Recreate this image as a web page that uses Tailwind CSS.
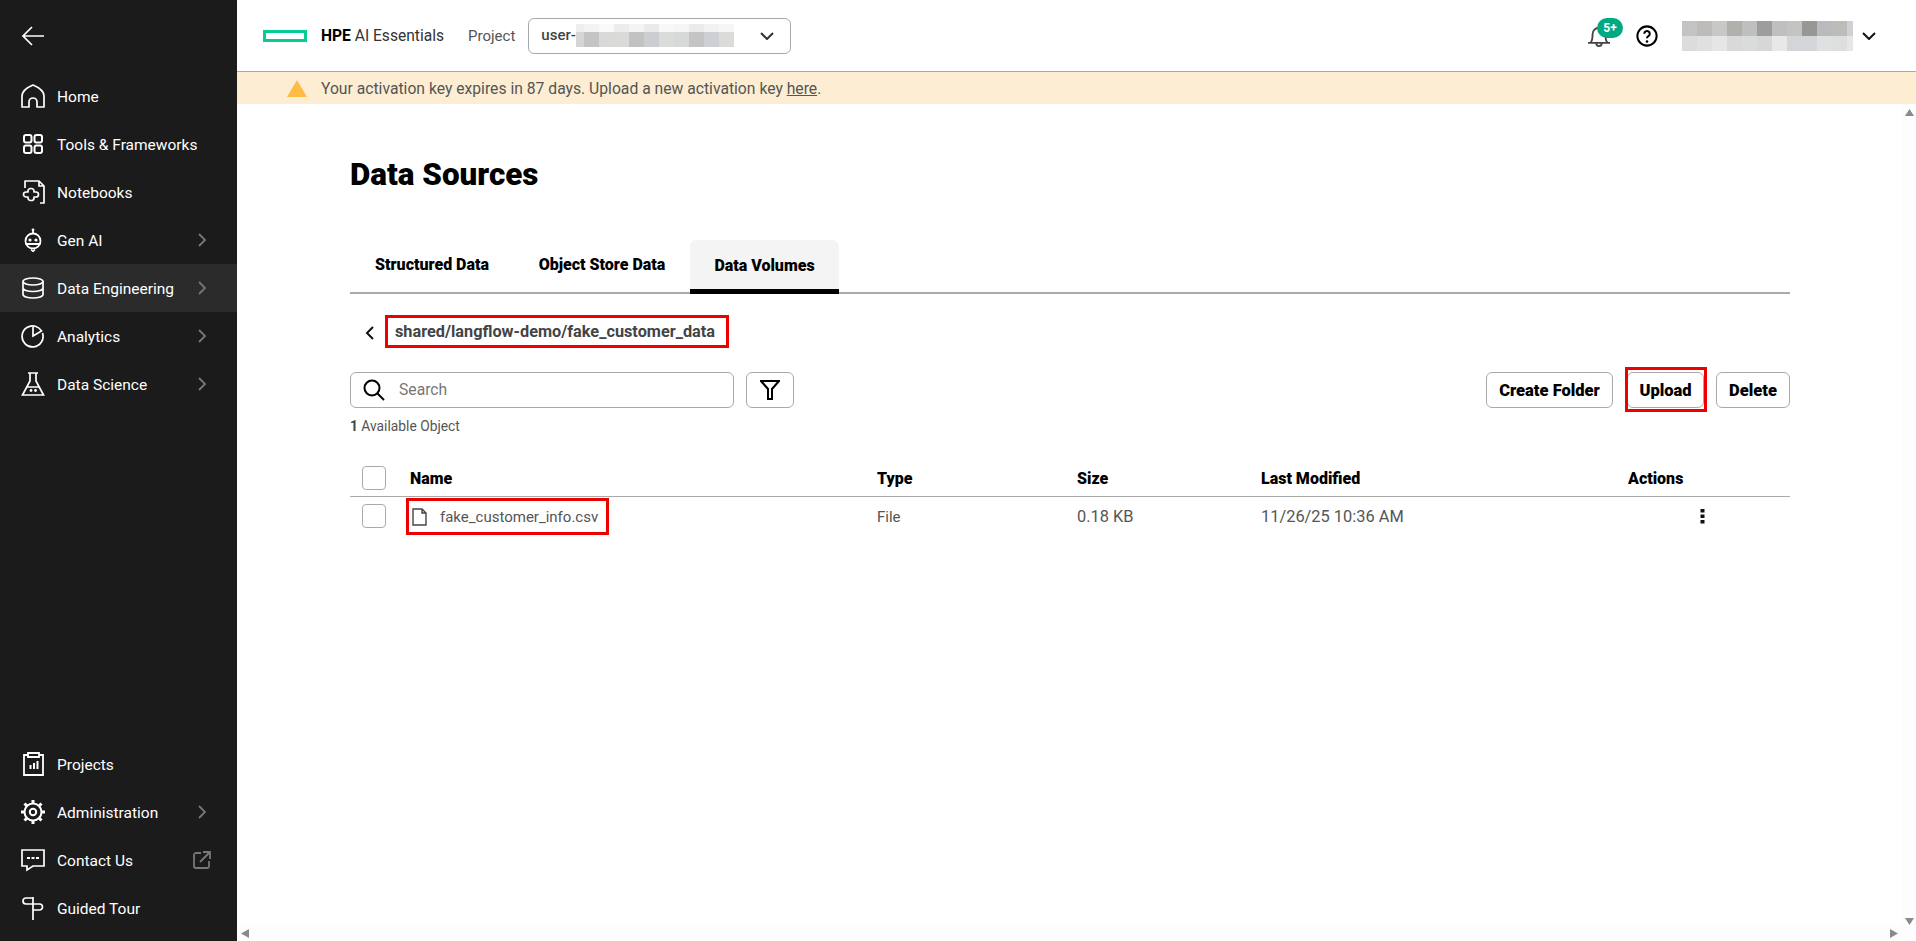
<!DOCTYPE html>
<html lang="en">
<head>
<meta charset="UTF-8">
<title>Data Sources</title>
<script src="https://cdn.jsdelivr.net/npm/@tailwindcss/browser@4"></script>
</head>
<body class="flex h-screen overflow-hidden bg-white font-['Roboto',sans-serif] text-[#444]">

<!-- Sidebar -->
<aside class="w-[237px] shrink-0 bg-[#1b1b1b] text-white flex flex-col text-[15.500px]">
  <div class="h-[72px] pl-[21px] flex items-center">
    <svg class="w-6 h-6" viewBox="0 0 24 24" fill="none" stroke="white" stroke-width="1.700"><path d="M23 12H2M11 3l-9 9 9 9"/></svg>
  </div>
  <nav>
    <a class="h-12 flex items-center pl-[21px]">
      <svg class="w-6 h-6 mr-[12px]" viewBox="0 0 24 24" fill="none" stroke="white" stroke-width="1.700" stroke-linejoin="round"><path d="M1 23V12C1 7 6 3.500 12 1c6 2.500 11 6 11 11v11h-7v-5a4 4 0 0 0-8 0v5z"/></svg>
      <span class="pt-1">Home</span>
    </a>
    <a class="h-12 flex items-center pl-[21px]">
      <svg class="w-6 h-6 mr-[12px]" viewBox="0 0 24 24" fill="none" stroke="white" stroke-width="2"><rect x="3" y="3" width="7.500" height="7.500" rx="2"/><rect x="13.500" y="3" width="7.500" height="7.500" rx="2"/><rect x="3" y="13.500" width="7.500" height="7.500" rx="2"/><rect x="13.500" y="13.500" width="7.500" height="7.500" rx="2"/></svg>
      <span class="pt-1">Tools &amp; Frameworks</span>
    </a>
    <a class="h-12 flex items-center pl-[21px]">
      <svg class="w-6 h-6 mr-[12px]" viewBox="0 0 24 24" fill="none" stroke="white" stroke-width="1.700" stroke-linejoin="round"><path d="M4 8V1h14l5 5v17h-4M18 1v5h5"/><path d="M7 11a2.500 2.500 0 0 1 2.500-2.500h1A2.500 2.500 0 0 1 13 11v1h2a2.500 2.500 0 0 1 0 5h-2v1a2.500 2.500 0 0 1-2.500 2.500h-1A2.500 2.500 0 0 1 7 18v-1H5a2.500 2.500 0 0 1 0-5h2z"/></svg>
      <span class="pt-1">Notebooks</span>
    </a>
    <a class="h-12 flex items-center pl-[21px]">
      <svg class="w-6 h-6 mr-[12px]" viewBox="0 0 24 24" fill="none" stroke="white" stroke-width="1.800"><ellipse cx="12" cy="13" rx="7.500" ry="7.500"/><path d="M12 3v3M4.500 16h15"/><circle cx="12" cy="1.800" r="1.400" fill="white" stroke="none"/><circle cx="9" cy="12" r="1.600" fill="white" stroke="none"/><circle cx="15" cy="12" r="1.600" fill="white" stroke="none"/><path d="M10 21.500l2 2 2-2" stroke-width="1.500"/></svg>
      <span class="pt-1">Gen AI</span>
      <svg class="ml-auto mr-[31px] w-2 h-[14px]" viewBox="0 0 8 14" fill="none" stroke="#777" stroke-width="1.800"><path d="M1 1l6 6-6 6"/></svg>
    </a>
    <a class="h-12 flex items-center pl-[21px] bg-[#2b2b2b]">
      <svg class="w-6 h-6 mr-[12px]" viewBox="0 0 24 24" fill="none" stroke="white" stroke-width="1.700"><ellipse cx="12" cy="5.500" rx="10" ry="3.500"/><path d="M2 5.500v13c0 2 4.500 3.500 10 3.500s10-1.500 10-3.500v-13M2 12c0 2 4.500 3.500 10 3.500S22 14 22 12"/></svg>
      <span class="pt-1">Data Engineering</span>
      <svg class="ml-auto mr-[31px] w-2 h-[14px]" viewBox="0 0 8 14" fill="none" stroke="#777" stroke-width="1.800"><path d="M1 1l6 6-6 6"/></svg>
    </a>
    <a class="h-12 flex items-center pl-[21px]">
      <svg class="w-6 h-6 mr-[12px]" viewBox="0 0 24 24" fill="none" stroke="white" stroke-width="1.700"><path d="M15 2.500A10.500 10.500 0 1 0 21.500 9"/><path d="M12 3v9l8.500-5A10 10 0 0 0 15 2.500"/></svg>
      <span class="pt-1">Analytics</span>
      <svg class="ml-auto mr-[31px] w-2 h-[14px]" viewBox="0 0 8 14" fill="none" stroke="#777" stroke-width="1.800"><path d="M1 1l6 6-6 6"/></svg>
    </a>
    <a class="h-12 flex items-center pl-[21px]">
      <svg class="w-6 h-6 mr-[12px]" viewBox="0 0 24 24" fill="none" stroke="white" stroke-width="1.700"><path d="M7 1h10M9 1v8L1.500 23h21L15 9V1M5.500 15h13"/><circle cx="10" cy="18.500" r="1.400" fill="white" stroke="none"/><circle cx="14.500" cy="18.500" r="1.400" fill="white" stroke="none"/></svg>
      <span class="pt-1">Data Science</span>
      <svg class="ml-auto mr-[31px] w-2 h-[14px]" viewBox="0 0 8 14" fill="none" stroke="#777" stroke-width="1.800"><path d="M1 1l6 6-6 6"/></svg>
    </a>
  </nav>
  <nav class="mt-auto pb-[9px]">
    <a class="h-12 flex items-center pl-[21px]">
      <svg class="w-6 h-6 mr-[12px]" viewBox="0 0 24 24" fill="none" stroke="white" stroke-width="1.800"><path d="M7 3H3v20h19V3h-4M7 1h11v4H7z"/><path d="M9.500 17v-4M13 17v-6M16.500 17v-8" stroke-width="2"/></svg>
      <span class="pt-1">Projects</span>
    </a>
    <a class="h-12 flex items-center pl-[21px]">
      <svg class="w-6 h-6 mr-[12px]" viewBox="0 0 24 24" fill="none" stroke="white" stroke-width="2"><circle cx="12" cy="12" r="8.500"/><circle cx="12" cy="12" r="3.200"/><path d="M12 0v3.500M12 20.500V24M0 12h3.500M20.500 12H24M3.500 3.500 6 6M18 18l2.500 2.500M20.500 3.500 18 6M6 18l-2.500 2.500" stroke-width="3"/></svg>
      <span class="pt-1">Administration</span>
      <svg class="ml-auto mr-[31px] w-2 h-[14px]" viewBox="0 0 8 14" fill="none" stroke="#777" stroke-width="1.800"><path d="M1 1l6 6-6 6"/></svg>
    </a>
    <a class="h-12 flex items-center pl-[21px]">
      <svg class="w-6 h-6 mr-[12px]" viewBox="0 0 24 24" fill="none" stroke="white" stroke-width="1.700"><path d="M1 2h22v16H12l-6 4v-4H1z"/><path d="M6 10h3M10.500 10h3M15 10h3" stroke-width="2.200"/></svg>
      <span class="pt-1">Contact Us</span>
      <svg class="ml-auto mr-[26px] w-[18px] h-[18px]" viewBox="0 0 18 18" fill="none" stroke="#777" stroke-width="1.800"><path d="M8 2H3a2 2 0 0 0-2 2v11a2 2 0 0 0 2 2h11a2 2 0 0 0 2-2v-5M7 11 17 1M10 1h7v7"/></svg>
    </a>
    <a class="h-12 flex items-center pl-[21px]">
      <svg class="w-6 h-6 mr-[12px]" viewBox="0 0 24 24" fill="none" stroke="white" stroke-width="1.700"><path d="M12 1v23M12 2H5a3 3 0 0 0 0 6h7M12 8h6.500a3 3 0 0 1 0 6H12"/></svg>
      <span class="pt-1">Guided Tour</span>
    </a>
  </nav>
</aside>

<div class="flex-1 min-w-0 flex flex-col">
  <!-- Header -->
  <header class="h-[72px] shrink-0 border-b border-[#aaa] flex items-center pl-[26px]">
    <span class="w-[44px] h-[12px] border-[3px] border-[#05cc93] mr-[14px]"></span>
    <span class="pt-0.5 text-[15.600px] text-[#333] mr-[24px]"><b class="text-black font-bold">HPE</b> AI Essentials</span>
    <span class="pt-0.5 text-[15px] text-[#555] mr-[13px]">Project</span>
    <div class="w-[263px] h-9 border border-[#aaa] rounded-md flex items-center pl-[12px] pr-[16px]">
      <span class="text-[15px] font-medium">user-</span>
      <div class="flex flex-col">
        <div class="flex h-2">
          <i class="w-[8px] bg-[#eee]"></i><i class="w-[15px] bg-[#f3f3f3]"></i><i class="w-[15px] bg-[#f9f9f9]"></i><i class="w-[15px] bg-[#ececec]"></i><i class="w-[15px] bg-[#f4f4f4]"></i><i class="w-[15px] bg-[#eaeaea]"></i><i class="w-[15px] bg-[#f8f8f8]"></i><i class="w-[15px] bg-[#f6f6f6]"></i><i class="w-[15px] bg-[#ebebeb]"></i><i class="w-[15px] bg-[#f2f2f2]"></i><i class="w-[15px] bg-[#f6f6f6]"></i>
        </div>
        <div class="flex h-[15px]">
          <i class="w-[8px] bg-[#d5d5d5]"></i><i class="w-[15px] bg-[#c4c4c4]"></i><i class="w-[15px] bg-[#d8dada]"></i><i class="w-[15px] bg-[#dadad8]"></i><i class="w-[15px] bg-[#c2c2c2]"></i><i class="w-[15px] bg-[#cbcdd0]"></i><i class="w-[15px] bg-[#dadcdc]"></i><i class="w-[15px] bg-[#d7d9d9]"></i><i class="w-[15px] bg-[#c4c4c4]"></i><i class="w-[15px] bg-[#cdcfd2]"></i><i class="w-[15px] bg-[#dbdbd9]"></i>
        </div>
      </div>
      <svg class="ml-auto w-[14px] h-2" viewBox="0 0 14 8" fill="none" stroke="#333" stroke-width="2"><path d="M1 1l6 6 6-6"/></svg>
    </div>
    <div class="ml-auto flex items-center">
      <div class="relative w-[26px] h-[22px] mr-[22px]">
        <svg class="absolute left-0 top-0 w-[22px] h-[22px]" viewBox="0 0 24 24" fill="none" stroke="#444" stroke-width="2"><path d="M3 19c1.500-2 2-4 2-9a7 7 0 0 1 14 0c0 5 .5 7 2 9M0 19.500h24M9 20a3 3 0 0 0 6 0"/></svg>
        <span class="absolute left-[9px] -top-[7px] w-[26px] h-[20px] rounded-full bg-[#01a982] text-white text-[12px] font-bold leading-[20px] text-center">5+</span>
      </div>
      <svg class="w-[22px] h-[22px] mr-[24px]" viewBox="0 0 24 24" fill="none" stroke="black" stroke-width="2.200"><circle cx="12" cy="12" r="10.500"/><path d="M9 9.500a3 3 0 1 1 4.500 2.600c-1 .6-1.500 1.200-1.500 2.400"/><circle cx="12" cy="18" r="1.400" fill="black" stroke="none"/></svg>
      <div class="flex flex-col w-[171px]">
        <div class="flex h-[15px]">
          <i class="w-[15px] bg-[#c4c3c1]"></i><i class="w-[15px] bg-[#bdbcba]"></i><i class="w-[15px] bg-[#c8c9c7]"></i><i class="w-[15px] bg-[#b1b0ac]"></i><i class="w-[15px] bg-[#bfbfbd]"></i><i class="w-[15px] bg-[#9d9d9d]"></i><i class="w-[15px] bg-[#bfbfbf]"></i><i class="w-[15px] bg-[#c3c4c2]"></i><i class="w-[15px] bg-[#989794]"></i><i class="w-[15px] bg-[#b9babc]"></i><i class="w-[15px] bg-[#bebcb9]"></i><i class="w-[6px] bg-[#cfd0d4]"></i>
        </div>
        <div class="flex h-[15px]">
          <i class="w-[15px] bg-[#dcdcdc]"></i><i class="w-[15px] bg-[#e0e0e0]"></i><i class="w-[15px] bg-[#e6e6e6]"></i><i class="w-[15px] bg-[#d9d9d9]"></i><i class="w-[15px] bg-[#dadcdc]"></i><i class="w-[15px] bg-[#d6d8d8]"></i><i class="w-[15px] bg-[#e8e8e8]"></i><i class="w-[15px] bg-[#d4d5d8]"></i><i class="w-[15px] bg-[#d5d6d9]"></i><i class="w-[15px] bg-[#dfe1e0]"></i><i class="w-[15px] bg-[#dddfde]"></i><i class="w-[6px] bg-[#e6e6e6]"></i>
        </div>
      </div>
      <svg class="w-[14px] h-2 ml-[9px] mr-[40px]" viewBox="0 0 14 8" fill="none" stroke="#111" stroke-width="2"><path d="M1 1l6 6 6-6"/></svg>
    </div>
  </header>

  <!-- Activation banner -->
  <div class="h-8 shrink-0 bg-[#fdeed3] flex items-center pl-[50px]">
    <svg class="w-[20px] h-[17px] mr-[14px]" viewBox="0 0 20 17"><path d="M10 0l10 17H0z" fill="#ffbc44"/></svg>
    <span class="pt-0.5 text-[15.700px] text-[#555]">Your activation key expires in 87 days. Upload a new activation key <u>here</u>.</span>
  </div>

  <div class="flex-1 min-h-0 flex">
    <main class="flex-1 min-w-0 overflow-hidden pl-[113px] pr-[112px] pt-[53px]">
      <h1 class="text-[31.400px] leading-9 font-black text-black">Data Sources</h1>

      <!-- Tabs -->
      <div class="mt-[47px] h-[54px] flex border-b-2 border-[#aaa] text-black font-black text-[16px]">
        <div class="w-[164px] flex items-center justify-center pb-[2px]">Structured Data</div>
        <div class="w-[176px] flex items-center justify-center pb-[2px]">Object Store Data</div>
        <div class="w-[149px] h-[54px] flex items-center justify-center bg-[#f4f4f4] rounded-t-md border-b-[5px] border-black pt-[3px]">Data Volumes</div>
      </div>

      <!-- Breadcrumb -->
      <div class="mt-[21px] flex items-center">
        <svg class="w-[9px] h-[14px] ml-[15px] mr-[11px] mt-[3px]" viewBox="0 0 9 14" fill="none" stroke="#111" stroke-width="2"><path d="M8 1 2 7l6 6"/></svg>
        <div class="w-[344px] h-[33px] border-[3px] border-[#ee0000] flex items-center pl-[7px] pt-0.5 font-bold text-[16.300px] text-[#444]">shared/langflow-demo/fake_customer_data</div>
      </div>

      <!-- Search and actions -->
      <div class="mt-6 flex items-center h-9">
        <div class="w-[384px] h-9 border border-[#aaa] rounded-md flex items-center pl-[12px]">
          <svg class="w-[22px] h-[22px] mr-[14px]" viewBox="0 0 22 22" fill="none" stroke="black" stroke-width="2"><circle cx="9" cy="9" r="7.500"/><path d="M14.500 14.500 21 21"/></svg>
          <span class="text-[15.700px] text-[#777]">Search</span>
        </div>
        <div class="ml-[12px] w-12 h-9 border border-[#aaa] rounded-md flex items-center justify-center">
          <svg class="w-[20px] h-[20px]" viewBox="0 0 20 20" fill="none" stroke="black" stroke-width="2"><path d="M1 1h18l-7 8v10H8V9z"/></svg>
        </div>
        <div class="ml-auto flex items-center text-black font-black text-[16.500px]">
          <div class="w-[127px] h-9 pt-0.5 border border-[#aaa] rounded-md flex items-center justify-center">Create Folder</div>
          <div class="relative ml-[14px] w-[77px] h-9 pt-0.5 border border-[#aaa] rounded-md flex items-center justify-center">
            Upload
            <span class="absolute -left-[3px] -right-[4px] -top-[6px] -bottom-[5px] border-[3px] border-[#ee0000]"></span>
          </div>
          <div class="ml-[12px] w-[74px] h-9 pt-0.5 border border-[#aaa] rounded-md flex items-center justify-center">Delete</div>
        </div>
      </div>
      <p class="mt-[9px] h-[18px] leading-[18px] text-[13.800px] text-[#555]"><b class="font-bold text-[#444]">1</b> Available Object</p>

      <!-- Table -->
      <div class="mt-[25px] h-[37px] grid grid-cols-[60px_467px_200px_184px_367px_1fr] items-center border-b border-[#aaa] text-black font-black text-[16px]">
        <span class="ml-[12px] w-6 h-6 border border-[#aaa] rounded"></span>
        <span class="pt-0.5">Name</span>
        <span class="pt-0.5">Type</span>
        <span class="pt-0.5">Size</span>
        <span class="pt-0.5">Last Modified</span>
        <span class="pt-0.5">Actions</span>
      </div>
      <div class="h-[38px] grid grid-cols-[60px_467px_200px_184px_367px_1fr] items-center text-[15px] text-[#555]">
        <span class="ml-[12px] w-6 h-6 border border-[#aaa] rounded"></span>
        <div class="-ml-[4px] w-[203px] h-[37px] pt-0.5 border-[3px] border-[#ee0000] flex items-center pl-[3px]">
          <svg class="w-[15px] h-[18px] mr-[13px]" viewBox="0 0 15 18" fill="none" stroke="#444" stroke-width="1.400"><path d="M1 1h9l4 4v12H1zM10 1v4h4"/></svg>
          fake_customer_info.csv
        </div>
        <span class="pt-0.5">File</span>
        <span class="pt-0.5 text-[16.400px]">0.18 KB</span>
        <span class="pt-0.5 text-[16.400px]">11/26/25 10:36 AM</span>
        <svg class="ml-[72px] w-[5px] h-[16px]" viewBox="0 0 5 16" fill="#111"><rect x="0.500" y="1" width="4" height="3.500"/><rect x="0.500" y="6.500" width="4" height="3.500"/><rect x="0.500" y="12" width="4" height="3.500"/></svg>
      </div>
    </main>

    <!-- Vertical scrollbar -->
    <div class="w-[14px] shrink-0 bg-[#fdfdfd] flex flex-col items-center justify-between pt-[5px] pb-[1px]">
      <svg class="w-[9px] h-[7px]" viewBox="0 0 9 7"><path d="M4.500 0 9 7H0z" fill="#8a8a8a"/></svg>
      <svg class="w-[9px] h-[7px]" viewBox="0 0 9 7"><path d="M4.500 7 9 0H0z" fill="#8a8a8a"/></svg>
    </div>
  </div>

  <!-- Horizontal scrollbar -->
  <div class="h-[15px] shrink-0 bg-[#fdfdfd] flex items-center justify-between pl-[4px] pr-[18px]">
    <svg class="w-[8px] h-[9px]" viewBox="0 0 8 9"><path d="M0 4.500 8 0v9z" fill="#8a8a8a"/></svg>
    <svg class="w-[8px] h-[9px]" viewBox="0 0 8 9"><path d="M8 4.500 0 0v9z" fill="#8a8a8a"/></svg>
  </div>
</div>
</body>
</html>
